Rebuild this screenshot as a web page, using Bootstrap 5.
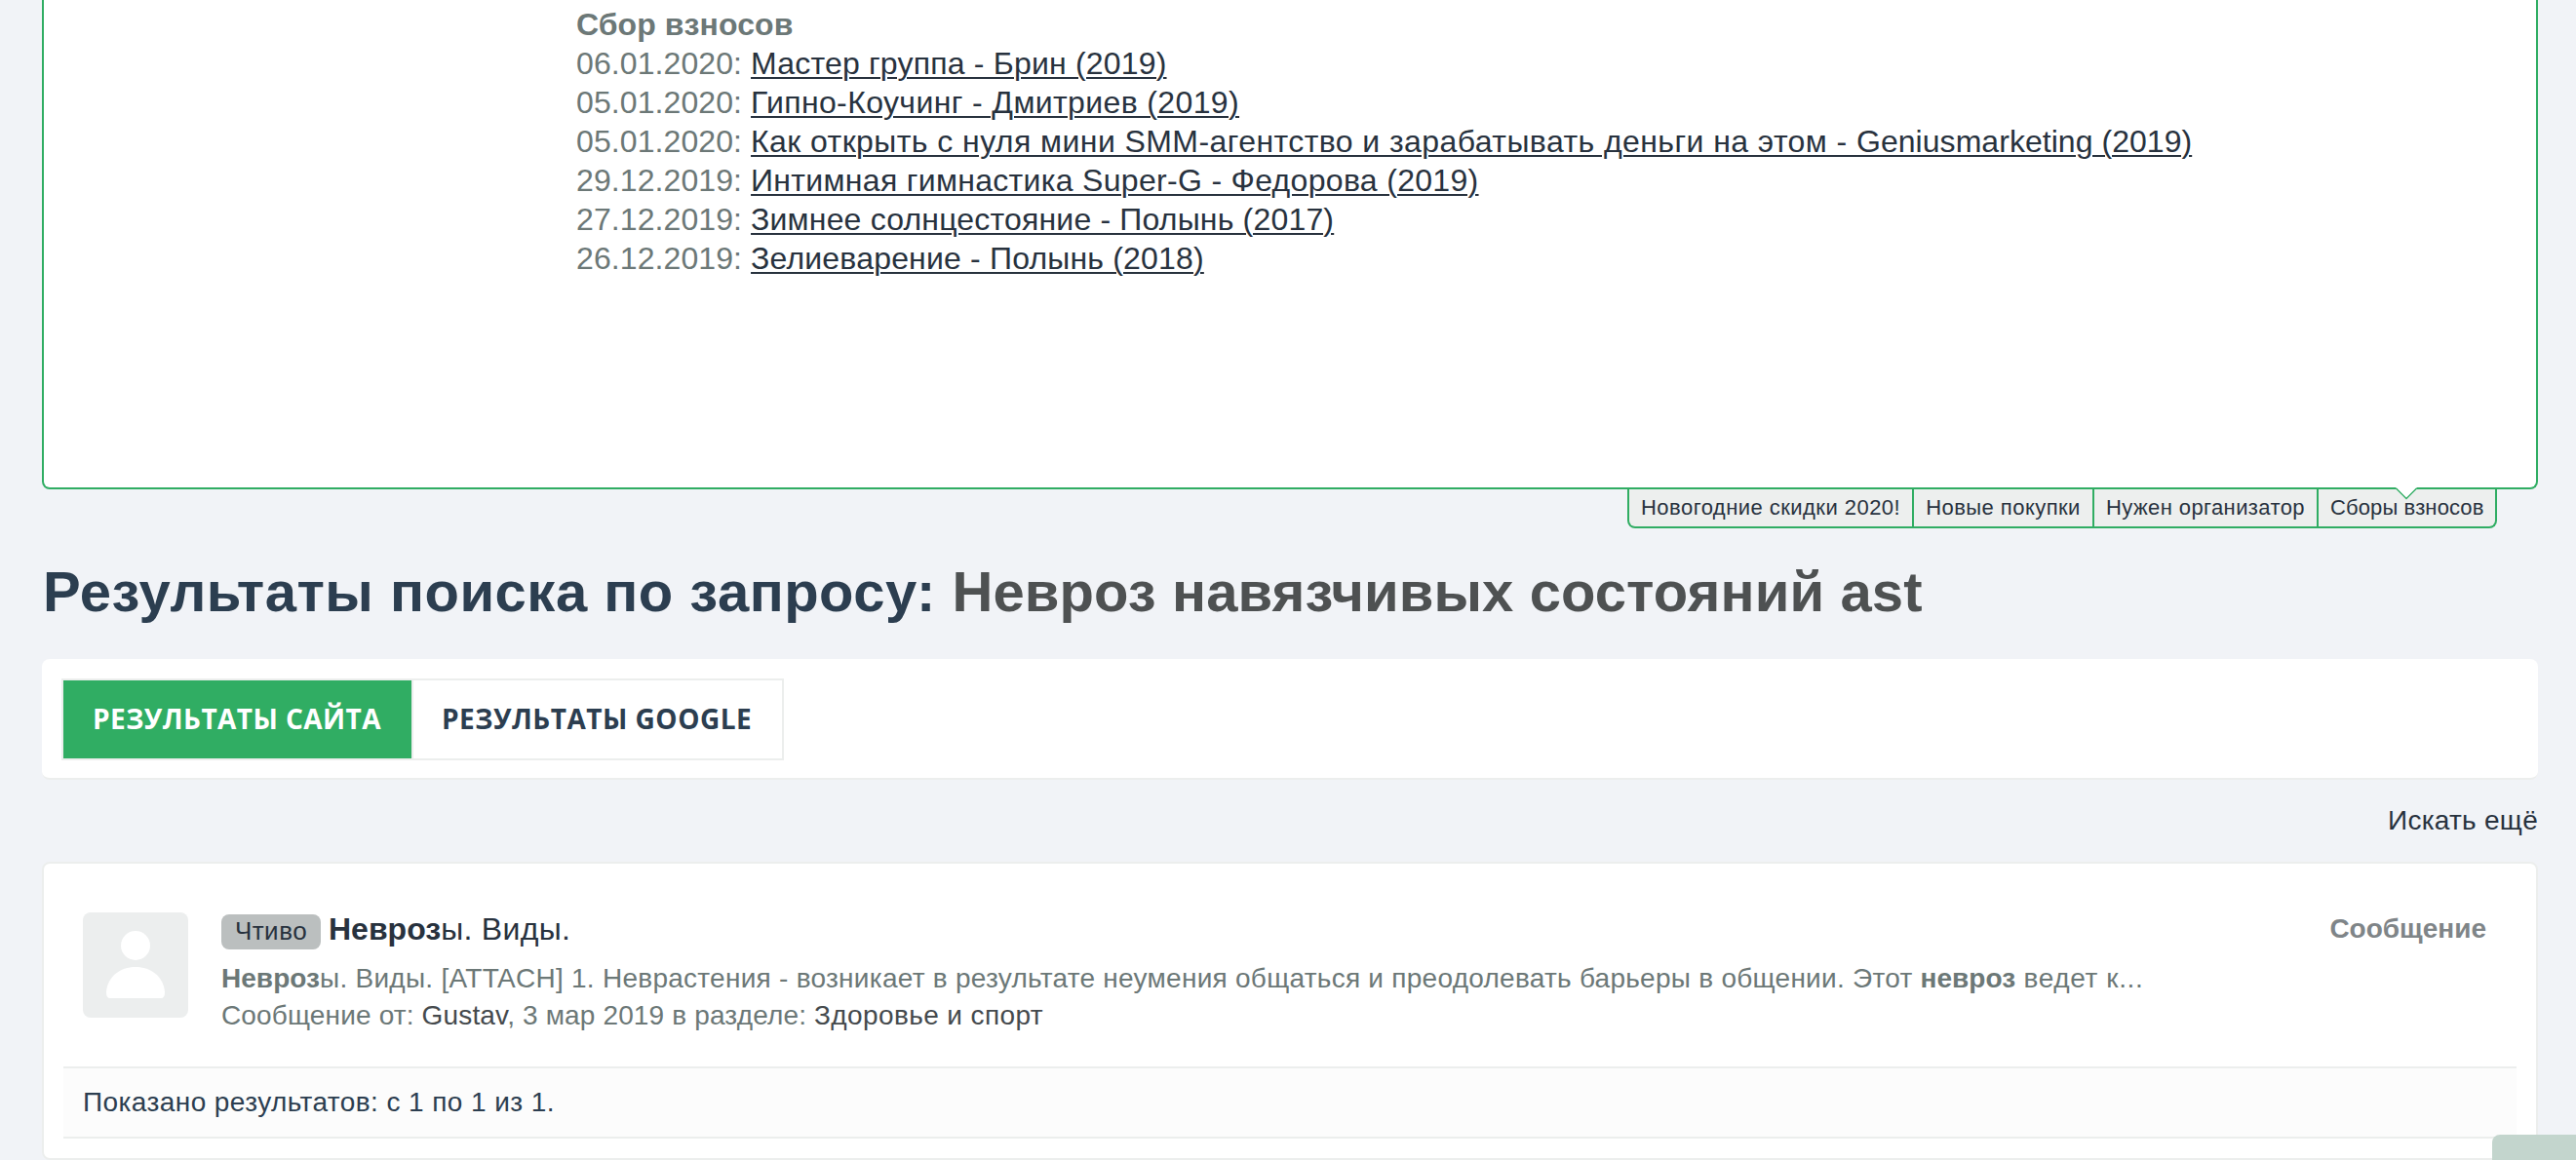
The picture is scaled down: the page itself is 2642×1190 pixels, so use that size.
<!DOCTYPE html>
<html lang="ru">
<head>
<meta charset="utf-8">
<meta name="viewport" content="width=device-width, initial-scale=1">
<title>Результаты поиска</title>
<link rel="stylesheet" href="https://cdn.jsdelivr.net/npm/bootstrap@5.3.0/dist/css/bootstrap.min.css">
<script src="https://cdn.jsdelivr.net/npm/bootstrap@5.3.0/dist/js/bootstrap.bundle.min.js"></script>
<style>
  :root { --green: #30ad63; --ink: #28323e; --navy: #2c3e50; --muted: #6c7877; --line: #eceeed; }
  html, body { height: 1190px; overflow: hidden; }
  body { background: #f1f3f7; color: var(--muted); font-family: "Liberation Sans", sans-serif; font-size: 28px; line-height: 38px; }
  a { color: var(--ink); text-decoration: none; }
  .page-wrap { width: 2560px; margin-left: 43px; }

  .notice-box { height: 502px; background: #fff; border: 2px solid var(--green); border-top: 0; border-radius: 0 0 8px 8px; padding: 5px 0 0 546px; font-size: 32px; line-height: 40px; }
  .notice-box a { text-decoration: underline; text-decoration-thickness: 2px; text-underline-offset: 3px; }
  .notice-box .notice-date { letter-spacing: .09px; }
  .notice-title { letter-spacing: .08px; }
  .s18 { letter-spacing: .182px; } .s19 { letter-spacing: .192px; } .s31 { letter-spacing: .311px; }
  .s38 { letter-spacing: .377px; } .s43 { letter-spacing: .43px; } .s04 { letter-spacing: .04px; }

  .notice-tabs { margin-right: 42px; border: 2px solid var(--green); border-top: 0; border-radius: 0 0 8px 8px; background: #edefee; font-size: 22px; line-height: 38px; }
  .notice-tabs a { display: block; padding: 0 12px; text-align: center; }
  .notice-tabs a + a { border-left: 2px solid var(--green); }
  .tab-a { width: 290px; letter-spacing: .46px; } .tab-b { width: 185px; letter-spacing: .45px; }
  .tab-c { width: 230px; letter-spacing: .4px; } .tab-d { width: 183px; letter-spacing: .12px; }
  .tab-notch { left: 79px; top: -2px; }

  .page-title { margin: 32px 0 36px 1px; font-size: 58px; line-height: 66px; font-weight: 700; color: var(--navy); letter-spacing: .5px; }
  .page-title em { font-style: normal; color: #4e5152; letter-spacing: .1px; }

  .mode-box { background: #fff; border-radius: 8px; border-bottom: 2px solid var(--line); height: 124px; padding: 20px; }
  .mode-tabs { border: 2px solid var(--line); font-family: "Open Sans", sans-serif; font-weight: 700; line-height: 78px; }
  .mode-tabs a { display: block; height: 80px; color: var(--navy); }
  .mode-tabs .is-on { width: 357px; padding-left: 30px; background: var(--green); color: #fff; letter-spacing: .45px; }
  .mode-tabs .is-off { width: 380px; border-left: 2px solid var(--line); padding-left: 29px; letter-spacing: .5px; }

  .again { height: 84px; padding-top: 23px; letter-spacing: .267px; }
  .result-box { height: 306px; background: #fff; border: 2px solid var(--line); border-radius: 8px; }
  .result-row { height: 208px; padding: 50px 51px 0 40px; }
  .face { width: 108px; height: 108px; margin-right: 34px; flex: none; }
  .tag { display: inline-block; height: 36px; line-height: 34px; border-radius: 8px; background: #bbbfbf; color: var(--ink); font-size: 26px; letter-spacing: .5px; width: 102px; text-align: center; margin: 2px 8px 0 0; }
  .hit-title { font-size: 32px; line-height: 34px; color: var(--ink); height: 49px; }
  .hit-title .rest { letter-spacing: .3px; }
  .snippet { letter-spacing: .265px; white-space: nowrap; }
  .snippet b { letter-spacing: .04px; } .snippet .tail { letter-spacing: .6px; }
  .hit-meta { letter-spacing: .15px; }
  .hit-meta a { color: #454a4d; } .hit-meta .sect { letter-spacing: .39px; }
  .kind { color: #7f8588; font-weight: 700; line-height: 34px; }
  .summary { height: 74px; margin: 0 20px; padding-left: 20px; border: solid var(--line); border-width: 2px 0; background: #fcfcfc; color: var(--navy); line-height: 69px; letter-spacing: .42px; }
  .corner { right: 0; bottom: 0; width: 86px; height: 26px; background: #c3d5cd; border-radius: 8px 0 0 0; }
</style>
</head>
<body>
<div class="page-wrap">
  <section class="notice-box">
    <div class="notice-title fw-bold">Сбор взносов</div>
    <div><span class="notice-date">06.01.2020: </span><a href="#" class="s19">Мастер группа - Брин (2019)</a></div>
    <div><span class="notice-date">05.01.2020: </span><a href="#" class="s38">Гипно-Коучинг - Дмитриев (2019)</a></div>
    <div><span class="notice-date">05.01.2020: </span><a href="#" class="s43">Как открыть с нуля мини SMM-агентство и зарабатывать деньги на этом - <span class="s04">Geniusmarketing (2019)</span></a></div>
    <div><span class="notice-date">29.12.2019: </span><a href="#" class="s31">Интимная гимнастика Super-G - Федорова (2019)</a></div>
    <div><span class="notice-date">27.12.2019: </span><a href="#" class="s18">Зимнее солнцестояние - Полынь (2017)</a></div>
    <div><span class="notice-date">26.12.2019: </span><a href="#" class="s18">Зелиеварение - Полынь (2018)</a></div>
  </section>
  <div class="d-flex justify-content-end">
    <nav class="notice-tabs d-flex text-nowrap">
      <a href="#" class="tab-a">Новогодние скидки 2020!</a>
      <a href="#" class="tab-b">Новые покупки</a>
      <a href="#" class="tab-c">Нужен организатор</a>
      <a href="#" class="tab-d position-relative">Сборы взносов<svg class="tab-notch position-absolute" width="22" height="14" viewBox="0 0 22 14"><path d="M0 0H22L11 11.5Z" fill="#fff"/><path d="M.5 1L11 11.5L21.5 1" fill="none" stroke="#30ad63" stroke-width="1.3"/></svg></a>
    </nav>
  </div>

  <h1 class="page-title text-nowrap">Результаты поиска по запросу: <em>Невроз навязчивых состояний ast</em></h1>

  <div class="mode-box">
    <nav class="mode-tabs d-inline-flex text-nowrap align-top">
      <a href="#" class="is-on">РЕЗУЛЬТАТЫ САЙТА</a>
      <a href="#" class="is-off">РЕЗУЛЬТАТЫ GOOGLE</a>
    </nav>
  </div>

  <div class="again text-end"><a href="#">Искать ещё</a></div>

  <section class="result-box">
    <div class="result-row d-flex align-items-start">
      <svg class="face" viewBox="0 0 108 108"><rect width="108" height="108" rx="8" fill="#eceeee"/><circle cx="54" cy="34" r="15" fill="#fff"/><path d="M28 88Q24 88 24 82C25 66 38 56 54 56S83 66 84 82Q84 88 80 88Z" fill="#fff"/></svg>
      <div class="flex-grow-1">
        <div class="hit-title d-flex"><span class="tag">Чтиво</span><a href="#"><b>Невроз</b><span class="rest">ы. Виды.</span></a></div>
        <div class="snippet"><b>Невроз</b>ы. Виды. [ATTACH] 1. Неврастения - возникает в результате неумения общаться и преодолевать барьеры в общении. Этот <b>невроз</b><span class="tail"> ведет к...</span></div>
        <div class="hit-meta">Сообщение от: <a href="#">Gustav</a>, 3 мар 2019 в разделе: <a href="#" class="sect">Здоровье и спорт</a></div>
      </div>
      <div class="kind">Сообщение</div>
    </div>
    <div class="summary">Показано результатов: с 1 по 1 из 1.</div>
  </section>
</div>
<div class="corner position-fixed"></div>
</body>
</html>
